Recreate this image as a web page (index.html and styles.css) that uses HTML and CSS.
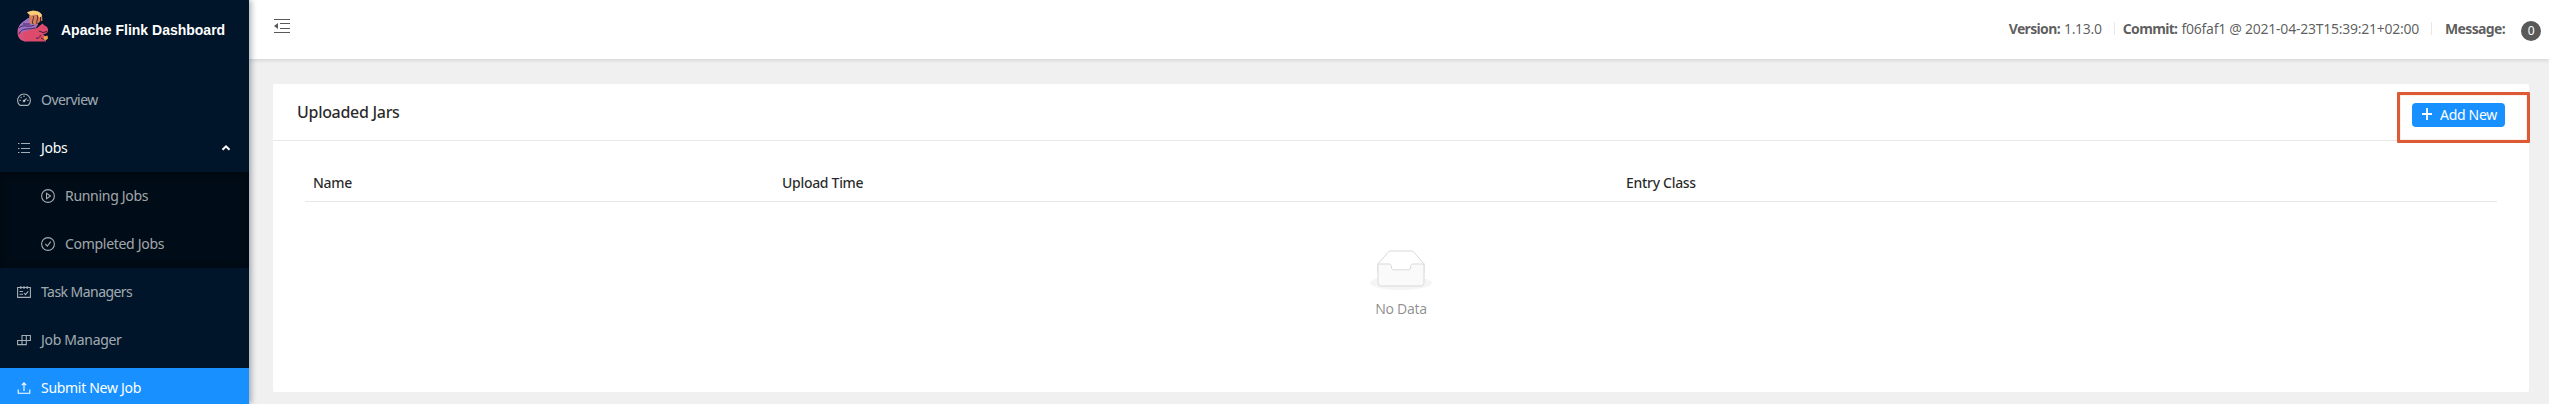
FILE: index.html
```html
<!DOCTYPE html>
<html lang="en">
<head>
<meta charset="utf-8">
<title>Apache Flink Dashboard</title>
<link rel="stylesheet" href="styles.css">
</head>
<body>
<div class="layout">
  <aside class="sider">
    <div class="brand">
      <svg class="logo" viewBox="0 0 32 33">
        <path d="M5 18C9 15 15 20 20 18C22 16 24 15 25.500 13.500L27.500 15.500C30 16 31.500 18.500 31 21C30.500 23.500 28 24 26 24L28 26L29 31.500H8C4 30 3 25 5 18Z" fill="#dd4b6c"/>
        <path d="M11 9C6 12 .5 15 .5 22C.5 28 4 31.500 9 31.500C6 28 5 24 8 22C12 20 19 21 21 14L18 11Z" fill="#d7527d"/>
        <path d="M11 8C6 12 1.500 14 1.500 20L4 23C8 19 18 21 21 14L17 9Z" fill="#9c70c9"/>
        <path d="M2 18C7 13 12 19 19 14M2 24C5 17 11 20 18 18M6 14L13 14" fill="none" stroke="#30234f" stroke-width=".9"/>
        <path d="M12 13C14 9 11 8 12.500 5L10 2.500C15 0 22 0 25 5L25.500 11C23 10 22 14 18 15Z" fill="#d87d58"/>
        <path d="M10 2.500C15 0 22 0 25 5L23 8L19 4.500L14 5.500Z" fill="#f7cd79"/>
        <path d="M16 6C18 8 14 11 16 14M20 5C22 8 19 10 20 14M23.500 7V11" fill="none" stroke="#412536" stroke-width="1"/>
        <path d="M22 21L26 22.500L30 21.500M19 28C22 29 24 26 23 25M24 28L28 30" fill="none" stroke="#34182e" stroke-width=".9"/>
        <path d="M27 26.500L30.500 25.500L31 28.500L28.500 30.500L26.500 29Z" fill="#eda344"/>
      </svg>
      <h1 class="brand-name">Apache Flink Dashboard</h1>
    </div>
    <nav class="menu">
      <a class="item">
        <svg class="icon" viewBox="0 0 14 14"><path d="M3 12.400A6.400 6.400 0 1 1 11 12.400ZM7 8L9.600 5.300M7 2.500V4M2.400 7.400H3.800M10.200 7.400H11.600M3.700 4L4.600 4.900"/><circle cx="7" cy="8" r=".8"/></svg>
        <span class="tight">Overview</span>
      </a>
      <a class="item open">
        <svg class="icon" viewBox="0 0 14 14"><path d="M4 2.500H13M4 7.500H13M4 11.500H13M1 2.500H2.500M1 7.500H2.500M1 11.500H2.500"/></svg>
        <span>Jobs</span>
        <svg class="arrow" viewBox="0 0 10 8"><path d="M1.500 5.800L5 2.300L8.500 5.800"/></svg>
      </a>
      <div class="submenu">
        <a class="item sub">
          <svg class="icon" viewBox="0 0 14 14"><circle cx="7" cy="7" r="6.400"/><path d="M5.500 4.300V9.700L9.500 7Z"/></svg>
          <span>Running Jobs</span>
        </a>
        <a class="item sub">
          <svg class="icon" viewBox="0 0 14 14"><circle cx="7" cy="7" r="6.400"/><path d="M4.300 6.800L6.300 9.200L9.800 4.700"/></svg>
          <span>Completed Jobs</span>
        </a>
      </div>
      <a class="item">
        <svg class="icon" viewBox="0 0 14 14"><path d="M.6 2.500H13.400V12.400H.6ZM3.800 1V4M7 1V4M10.200 1V4M2.500 6.500H6M2.500 9.200H6M7 8L8.500 9.700L11.200 6.300"/></svg>
        <span class="tight">Task Managers</span>
      </a>
      <a class="item">
        <svg class="icon" viewBox="0 0 14 14"><path d="M5 2.500H13.400V7.500H9.300V11.600H.6V7.500H5ZM9.300 2.500V7.500H5V11.600"/></svg>
        <span>Job Manager</span>
      </a>
      <a class="item selected">
        <svg class="icon" viewBox="0 0 14 14"><path d="M1.200 8.500V12.300H12.800V8.500M7 10V2M4.800 4.200L7 1.800L9.200 4.200"/></svg>
        <span>Submit New Job</span>
      </a>
    </nav>
  </aside>
  <div class="main">
    <header class="header">
      <svg class="fold" viewBox="0 0 16 14"><path d="M0 .5H16M6 4.500H16M6 9.500H16M0 13.500H16"/><path class="solid" d="M0 7L4 4V10Z"/></svg>
      <div class="info">
        <strong class="label">Version:</strong>
        <span class="version">1.13.0</span>
        <i class="divider"></i>
        <strong class="label">Commit:</strong>
        <span class="commit">f06faf1 @ 2021-04-23T15:39:21+02:00</span>
        <i class="divider"></i>
        <strong class="message">Message:</strong>
        <span class="badge">0</span>
      </div>
    </header>
    <main class="content">
      <section class="card">
        <div class="card-head">
          <h2 class="card-title">Uploaded Jars</h2>
          <button class="add">
            <svg class="plus" viewBox="0 0 10 12"><path d="M5 0V12M0 6H10"/></svg>
            <span>Add New</span>
          </button>
          <div class="highlight"></div>
        </div>
        <div class="card-body">
          <div class="table-head">
            <div class="th">Name</div>
            <div class="th">Upload Time</div>
            <div class="th">Entry Class</div>
          </div>
          <div class="empty">
            <svg class="empty-icon" viewBox="0 0 64 41">
              <ellipse cx="32" cy="33" rx="31" ry="7" fill="#f5f5f5"/>
              <path d="M55 12.760L44.854 1.258C44.367.474 43.656 0 42.907 0H21.093C20.344 0 19.633.474 19.146 1.257L9 12.761V22H55Z" transform="translate(0 1)" fill="#fff" stroke="#d9d9d9"/>
              <path d="M41.613 15.931C41.613 14.326 42.607 13.001 43.840 13H55V31.137C55 33.260 53.680 35 52.050 35H11.950C10.320 35 9 33.259 9 31.137V13H20.160C21.393 13 22.387 14.323 22.387 15.928V15.950C22.387 17.555 23.392 18.851 24.624 18.851H39.376C40.608 18.851 41.613 17.543 41.613 15.938Z" transform="translate(0 1)" fill="#fafafa" stroke="#d9d9d9"/>
            </svg>
            <span class="empty-text">No Data</span>
          </div>
        </div>
      </section>
    </main>
  </div>
</div>
</body>
</html>
```
FILE: styles.css
```css
* { box-sizing: border-box; }
body {
  margin: 0;
  height: 404px;
  overflow: hidden;
  font: 14px/22px "Noto Sans", "Open Sans", sans-serif;
  letter-spacing: -0.3px;
  color: rgba(0, 0, 0, 0.65);
  background: #f0f0f0;
}
.layout { display: flex; height: 404px; }
.sider {
  position: relative;
  z-index: 2;
  flex: none;
  width: 249px;
  background: #001529;
  box-shadow: 2px 0 6px rgba(0, 21, 41, 0.35);
}
.brand { display: flex; align-items: center; height: 60px; padding-left: 17px; }
.logo { width: 32px; height: 33px; margin-top: -8px; }
.brand-name {
  margin: 0 0 0 12px;
  font: 700 14px/20px "Liberation Sans", Arial, sans-serif;
  letter-spacing: 0;
  white-space: nowrap;
  color: #fff;
}
.menu { padding-top: 16px; }
.item {
  display: flex;
  align-items: center;
  height: 48px;
  padding-left: 17px;
  color: rgba(255, 255, 255, 0.65);
  white-space: nowrap;
}
.tight { letter-spacing: -0.55px; }
.icon, .arrow, .plus, .fold { flex: none; fill: none; stroke: currentColor; }
.icon { width: 14px; height: 14px; margin-right: 10px; stroke-width: 1.1; }
.open { color: #fff; }
.open .icon { color: #a6adb4; }
.arrow { width: 10px; height: 8px; margin: 0 18px 0 auto; stroke-width: 2; }
.submenu { background: #000c17; box-shadow: inset 0 2px 8px rgba(0, 0, 0, 0.45); }
.sub { padding-left: 41px; }
.selected { height: 40px; margin-top: 4px; color: #fff; background: #1890ff; }
.main { display: flex; flex: 1; flex-direction: column; min-width: 0; }
.header {
  position: relative;
  z-index: 1;
  display: flex;
  flex: none;
  align-items: center;
  height: 59px;
  padding: 0 8px 0 25px;
  background: #fff;
  box-shadow: 0 1px 4px rgba(0, 21, 41, 0.15);
}
.fold { width: 16px; height: 14px; margin-top: -7px; stroke-width: 1; }
.fold .solid { fill: currentColor; stroke: none; }
.info { display: flex; align-items: center; margin-left: auto; padding-bottom: 2px; white-space: nowrap; }
.label, .message { letter-spacing: -0.65px; }
.label { margin-right: 4px; }
.commit { letter-spacing: -0.25px; }
.divider { width: 1px; height: 13px; margin: 0 13px 0 12px; background: #e8e8e8; }
.version + .divider { margin-right: 8px; }
.badge {
  width: 20px;
  height: 20px;
  margin: 5px 0 0 16px;
  border-radius: 10px;
  font-size: 12px;
  line-height: 20px;
  text-align: center;
  color: #fff;
  background: #595959;
}
.content { padding: 25px 20px 12px 24px; }
.card { height: 308px; border-radius: 2px; background: #fff; }
.card-head {
  position: relative;
  display: flex;
  align-items: center;
  justify-content: space-between;
  height: 57px;
  padding: 0 24px;
  border-bottom: 1px solid #e8e8e8;
}
.card-title { margin: 0; font-size: 16px; font-weight: 500; line-height: 24px; color: rgba(0, 0, 0, 0.85); }
.add {
  display: flex;
  align-items: center;
  width: 93px;
  height: 24px;
  margin-top: 6px;
  padding: 0 0 0 10px;
  border: 0;
  border-radius: 4px;
  font: inherit;
  letter-spacing: inherit;
  white-space: nowrap;
  color: #fff;
  background: #1890ff;
}
.plus { width: 10px; height: 12px; margin: -2px 8px 0 0; stroke-width: 1.8; }
.highlight {
  position: absolute;
  top: 8px;
  right: -1px;
  width: 133px;
  height: 51px;
  border: 3px solid #dc5b35;
  border-radius: 1px;
  box-shadow: inset 0 0 1px #dc5b35;
  pointer-events: none;
}
.card-body { padding: 24px 32px; }
.table-head {
  display: grid;
  grid-template-columns: 469px 844px 1fr;
  height: 37px;
  border-bottom: 1px solid #e8e8e8;
}
.th { padding: 7px 8px 0; font-weight: 500; line-height: 22px; color: rgba(0, 0, 0, 0.85); }
.empty { display: flex; flex-direction: column; align-items: center; padding-top: 48px; }
.empty-icon { width: 64px; height: 41px; margin-bottom: 7px; }
.empty-text { color: rgba(0, 0, 0, 0.45); }
```
